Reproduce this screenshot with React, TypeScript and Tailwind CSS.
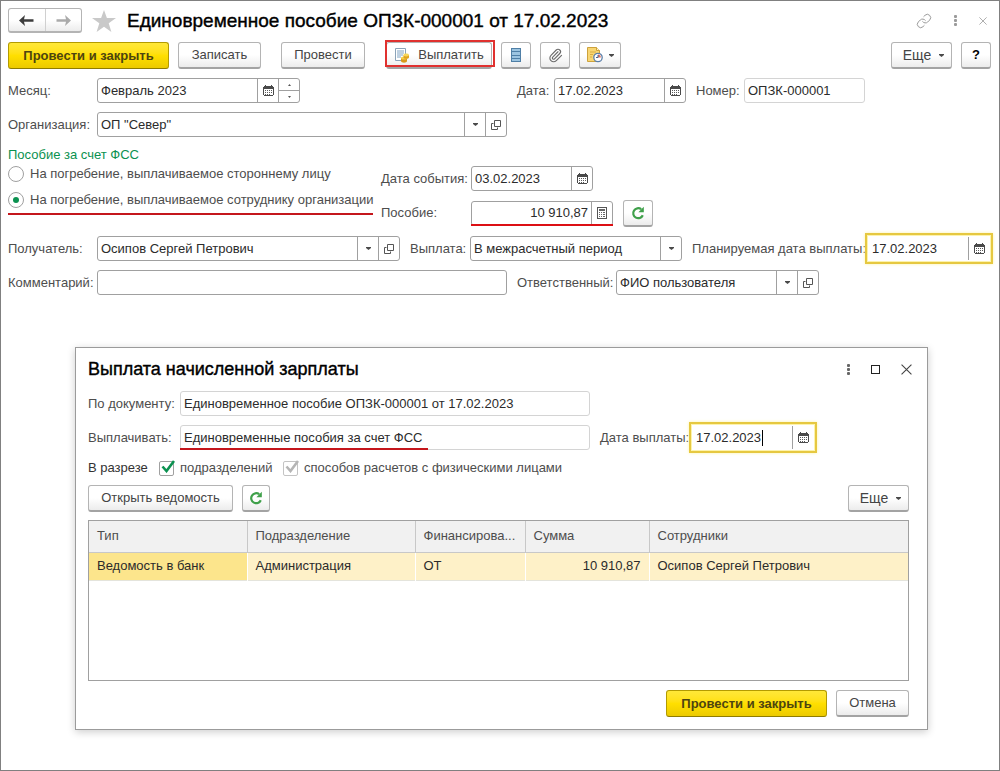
import type { ReactNode } from "react";
import { Link, Paperclip } from "lucide-react";

const cx = (...parts: (string | false | undefined)[]) => parts.filter(Boolean).join(" ");

/* ---------- icons ---------- */

function CalendarIcon() {
  return (
    <svg width="11" height="11" viewBox="0 0 11 11" shapeRendering="crispEdges" aria-hidden="true">
      <path d="M2 0h1v1h5V0h1v1h1v1h1v8h-1v1H1v-1H0V2h1V1h1z" fill="#4a4a4a" />
      <path d="M1 4h9v6H1z" fill="#fff" />
      <path d="M2 5h1v1H2zM4 5h1v1H4zM6 5h1v1H6zM8 5h1v1H8zM2 7h1v1H2zM4 7h1v1H4zM6 7h1v1H6zM8 7h1v1H8zM4 9h1v1H4zM2 9h1v1H2zM6 9h1v1H6z" fill="#5a5a5a" />
    </svg>
  );
}

function CalculatorIcon() {
  return (
    <svg width="10" height="12" viewBox="0 0 10 12" shapeRendering="crispEdges" aria-hidden="true">
      <path d="M.5.5h9v11h-9z" fill="#fff" stroke="#555" />
      <path d="M2 2h6v2H2z" fill="#666" />
      <path d="M2 5h1v1H2zM4 5h1v1H4zM6 5h2v1H6zM2 7h1v1H2zM4 7h1v1H4zM6 7h2v1H6zM2 9h1v1H2zM4 9h1v1H4zM6 9h2v1H6z" fill="#666" />
    </svg>
  );
}

function ArrowDown() {
  return (
    <svg width="5" height="3" viewBox="0 0 5 3" aria-hidden="true">
      <path d="M0 0h5v1L2.500 3 0 1z" fill="#4a4a4a" />
    </svg>
  );
}

function OpenIcon() {
  return (
    <svg width="10" height="10" viewBox="0 0 10 10" fill="none" stroke="#555" aria-hidden="true">
      <path d="M3.500.5h6v6h-6zM2.500 3.500h-2v6h6v-2" />
    </svg>
  );
}

function RefreshIcon() {
  return (
    <svg width="14" height="14" viewBox="0 0 14 14" fill="none" aria-hidden="true">
      <path d="M11.800 9.200A5 5 0 1 1 10.200 3.200" stroke="#3fa04a" strokeWidth="2.200" />
      <path d="M12.800.8v5.400H7.400z" fill="#3fa04a" />
    </svg>
  );
}

function NavArrow({ back = false }: { back?: boolean }) {
  return (
    <svg width="15" height="11" viewBox="0 0 15 11" aria-hidden="true">
      {back ? (
        <path d="M6 0 0 5.500 6 11 5 6.700h9.500V4.300H5z" fill="#3c3c3c" />
      ) : (
        <path d="m9 0 6 5.500L9 11l1-4.300H.5V4.300H10z" fill="#aaa" />
      )}
    </svg>
  );
}

function StarIcon() {
  return (
    <svg width="24" height="22" viewBox="0 0 24 22" aria-hidden="true">
      <path d="m12 0 2.900 8H24l-7.300 5.200L19.400 22 12 16.800 4.600 22l2.700-8.800L0 8h9.100z" fill="#c9c9c9" />
    </svg>
  );
}

function DotsIcon({ color }: { color: string }) {
  return (
    <svg width="3" height="11" viewBox="0 0 3 11" fill={color} aria-hidden="true">
      <rect width="3" height="3" rx="1" />
      <rect y="4" width="3" height="3" rx="1" />
      <rect y="8" width="3" height="3" rx="1" />
    </svg>
  );
}

function CrossIcon({ size, color }: { size: number; color: string }) {
  return (
    <svg width={size} height={size} viewBox="0 0 10 10" stroke={color} aria-hidden="true">
      <path d="m.5.5 9 9m0-9-9 9" />
    </svg>
  );
}

function PayIcon() {
  return (
    <svg width="16" height="16" viewBox="0 0 16 16" aria-hidden="true">
      <path d="M1.500 1.500h10v12h-10z" fill="#fff" stroke="#8ba3b8" />
      <path d="M3 4h7M3 6h7M3 8h6M3 10h4" stroke="#7fa3c4" />
      <path d="M7 11v3c0 2.200 6 2.200 6 0v-3z" fill="#d79a1c" />
      <ellipse cx="10" cy="11" rx="3" ry="1.500" fill="#f5cf4b" />
      <path d="M9.500 8v2.500c0 1.800 5.500 1.800 5.500 0V8z" fill="#dfa320" />
      <ellipse cx="12.200" cy="8" rx="2.800" ry="1.400" fill="#f7d65a" />
    </svg>
  );
}

function RegisterIcon() {
  return (
    <svg width="10" height="14" viewBox="0 0 10 14" shapeRendering="crispEdges" aria-hidden="true">
      <path d="M0 0h10v14H0z" fill="#4f7fa6" />
      <path d="M1 1h8v2H1zM1 4h8v3H1zM1 8h8v2H1zM1 11h8v2H1z" fill="#9cc4e0" />
    </svg>
  );
}

function ScheduleIcon() {
  return (
    <svg width="16" height="16" viewBox="0 0 16 16" aria-hidden="true">
      <path d="M.5.5h9l3 3v11H.5z" fill="#f8d673" stroke="#cda23c" />
      <path d="M9.500.5v3h3" fill="#fff3c4" stroke="#cda23c" />
      <path d="M3 5h6M3 7.500h3M3 10h2" stroke="#d8ac42" />
      <circle cx="11" cy="10.500" r="4.200" fill="#fff" stroke="#5b7fa8" strokeWidth="1.300" />
      <path d="M11 10.500V7.600a2.900 2.900 0 0 1 2.900 2.900z" fill="#e2735f" />
      <path d="M11 8v2.500H9" fill="none" stroke="#47648a" />
    </svg>
  );
}

/* ---------- controls ---------- */

type ButtonProps = { children: ReactNode; className?: string; label?: string; primary?: boolean };

function Button({ children, className, label, primary }: ButtonProps) {
  return (
    <button
      type="button"
      aria-label={label}
      className={cx(
        "flex h-[27px] shrink-0 items-center justify-center rounded-[3px] border",
        primary
          ? "border-[#b39b00] border-b-[#8f7c00] bg-linear-to-b from-[#ffe838] via-[#ffdf00] to-[#ecca00] font-bold text-[#4d4410]"
          : "border-[#b4b4b4] border-b-2 border-b-[#a3a3a3] bg-linear-to-b from-white from-50% to-[#ececec] text-[#444]",
        className,
      )}
    >
      {children}
    </button>
  );
}

function MoreButton() {
  return (
    <Button className="w-[61px] gap-2 pl-1">
      <span className="text-[14px]">Еще</span> <ArrowDown />
    </Button>
  );
}

function FieldButton({ label, children }: { label: string; children: ReactNode }) {
  return (
    <button type="button" aria-label={label} className="flex w-[21px] shrink-0 items-center justify-center border-l border-[#a0a0a0]">
      {children}
    </button>
  );
}

function Spinner() {
  return (
    <div className="flex w-[21px] shrink-0 flex-col border-l border-[#a0a0a0]">
      <button type="button" aria-label="Следующий месяц" className="flex flex-1 items-center justify-center border-b border-[#a0a0a0]">
        <svg width="3" height="2" viewBox="0 0 3 2" aria-hidden="true"><path d="M0 2h3L1.500 0z" fill="#555" /></svg>
      </button>
      <button type="button" aria-label="Предыдущий месяц" className="flex flex-1 items-center justify-center">
        <svg width="3" height="2" viewBox="0 0 3 2" aria-hidden="true"><path d="M0 0h3L1.500 2z" fill="#555" /></svg>
      </button>
    </div>
  );
}

type FieldProps = {
  id: string;
  value: string;
  className: string;
  children?: ReactNode;
  readOnly?: boolean;
  right?: boolean;
  select?: boolean;
  highlighted?: boolean;
};

function Field({ id, value, className, children, readOnly, right, select, highlighted }: FieldProps) {
  return (
    <div
      className={cx(
        "relative flex h-[25px] shrink-0 border bg-white",
        highlighted
          ? "border-transparent shadow-[0_0_3px_3px_#fdf3a8] outline-2 outline-offset-1 outline-[#e6c840]"
          : readOnly
            ? "rounded-[3px] border-[#d4d4d4]"
            : "rounded-[3px] border-[#a0a0a0]",
        className,
      )}
    >
      {select ? (
        <div className="grid min-w-0 flex-1">
          <select id={id} defaultValue={value} className="col-start-1 row-start-1 w-full appearance-none bg-transparent pr-6 pl-[3px] outline-none">
            <option>{value}</option>
          </select>
          <span className="pointer-events-none col-start-1 row-start-1 flex w-[21px] items-center justify-center justify-self-end border-l border-[#a0a0a0]">
            <ArrowDown />
          </span>
        </div>
      ) : (
        <input
          id={id}
          defaultValue={value}
          readOnly={readOnly}
          className={cx("min-w-0 flex-1 bg-transparent px-[3px] outline-none", right && "text-right")}
        />
      )}
      {children}
    </div>
  );
}

function Label({ htmlFor, className, children }: { htmlFor: string; className?: string; children: ReactNode }) {
  return (
    <label htmlFor={htmlFor} className={cx("shrink-0 whitespace-nowrap text-[#4d4d4d]", className)}>
      {children}
    </label>
  );
}

function Radio({ label, checked }: { label: string; checked?: boolean }) {
  return (
    <label className="flex h-5 items-center gap-[6px] whitespace-nowrap text-[#4d4d4d]">
      <input
        type="radio"
        name="benefit"
        defaultChecked={checked}
        className="grid size-4 shrink-0 appearance-none place-items-center rounded-full border border-[#a0a0a0] bg-white before:size-[6px] before:rounded-full checked:before:bg-[#0b9150]"
      />
      {label}
    </label>
  );
}

function Checkbox({ label, disabled, className }: { label: string; disabled?: boolean; className?: string }) {
  return (
    <label className={cx("flex items-center gap-[6px] whitespace-nowrap text-[#4d4d4d]", className)}>
      <span className="relative size-[15px]">
        <input
          type="checkbox"
          defaultChecked
          disabled={disabled}
          className={cx("block size-[15px] appearance-none rounded-[2px] border bg-white", disabled ? "border-[#c4c4c4]" : "border-[#a0a0a0]")}
        />
        <svg className="pointer-events-none absolute -top-px left-[2px]" width="14" height="13" viewBox="0 0 14 13" aria-hidden="true">
          <path d="m1.500 6.500 4 4.500L13 1" fill="none" stroke={disabled ? "#b5b5b5" : "#0b9150"} strokeWidth="2.600" />
        </svg>
      </span>
      {label}
    </label>
  );
}

/* ---------- payment dialog ---------- */

function PaymentDialog() {
  return (
    <section
      role="dialog"
      aria-labelledby="dialog-title"
      className="mt-[52px] ml-[67px] flex w-full max-w-[853px] flex-col border border-[#9b9b9b] bg-white px-3 pt-[9px] pb-3 shadow-[0_2px_8px_rgba(0,0,0,0.2)]"
    >
      <header className="flex h-6 items-center">
        <h2 id="dialog-title" className="mr-auto text-[18px] leading-6 text-black [-webkit-text-stroke:0.4px_#000]">
          Выплата начисленной зарплаты
        </h2>
        <div className="flex items-center gap-[21px] pr-[1px]">
          <button type="button" aria-label="Меню"><DotsIcon color="#666" /></button>
          <button type="button" aria-label="Развернуть" className="size-[9px] border border-[#222]" />
          <button type="button" aria-label="Закрыть" className="pr-[2px]"><CrossIcon size={11} color="#444" /></button>
        </div>
      </header>

      <div className="mt-[10px] flex items-center">
        <Label htmlFor="by-document" className="w-[92px]">По документу:</Label>
        <Field id="by-document" value="Единовременное пособие ОПЗК-000001 от 17.02.2023" className="w-[410px]" readOnly />
      </div>
      <div className="mt-[9px] flex items-center">
        <Label htmlFor="pay-kind" className="w-[92px]">Выплачивать:</Label>
        <Field id="pay-kind" value="Единовременные пособия за счет ФСС" className="w-[410px]" readOnly>
          <span className="absolute -bottom-px -left-px h-[2px] w-[248px] bg-[#c4161c]" />
        </Field>
        <Label htmlFor="pay-date" className="w-[102px] pl-[10px]">Дата выплаты:</Label>
        <Field id="pay-date" value="17.02.2023" className="w-[122px]" highlighted>
          <span className="absolute top-1 left-[69px] h-4 w-px bg-black" />
          <FieldButton label="Выбрать дату"><CalendarIcon /></FieldButton>
        </Field>
      </div>

      <div className="mt-2 flex h-5 items-center">
        <span className="w-[71px] text-[#333]">В разрезе</span>
        <Checkbox label="подразделений" className="w-[124px]" />
        <Checkbox label="способов расчетов с физическими лицами" disabled />
      </div>

      <div className="mt-[7px] flex gap-[9px]">
        <Button className="w-[145px]">Открыть ведомость</Button>
        <Button className="w-7" label="Обновить"><RefreshIcon /></Button>
        <div className="ml-auto pr-[6px]"><MoreButton /></div>
      </div>

      <div className="mt-2 mr-[6px] h-[161px] border border-[#a0a0a0]">
        <table className="w-full table-fixed border-collapse text-left">
          <colgroup>
            <col className="w-[158px]" />
            <col className="w-[168px]" />
            <col className="w-[110px]" />
            <col className="w-[124px]" />
            <col />
          </colgroup>
          <thead>
            <tr className="h-[31px] border-b border-[#c8c8c8] bg-[#f1f1f1] text-[#4d4d4d]">
              {["Тип", "Подразделение", "Финансирова...", "Сумма", "Сотрудники"].map((title) => (
                <th key={title} className="border-r border-[#c8c8c8] px-2 font-normal whitespace-nowrap last:border-r-0">{title}</th>
              ))}
            </tr>
          </thead>
          <tbody>
            <tr className="h-7 border-b border-[#e4e4dc] bg-[#fef1c8]">
              <td className="border-r border-white bg-[#fce58c] px-2">Ведомость в банк</td>
              <td className="border-r border-white px-2">Администрация</td>
              <td className="border-r border-white px-2">ОТ</td>
              <td className="border-r border-white px-2 text-right">10 910,87</td>
              <td className="px-2">Осипов Сергей Петрович</td>
            </tr>
          </tbody>
        </table>
      </div>

      <footer className="mt-[9px] flex justify-end gap-[9px] pr-[6px]">
        <Button primary className="w-[161px]">Провести и закрыть</Button>
        <Button className="w-[73px]">Отмена</Button>
      </footer>
    </section>
  );
}

/* ---------- page ---------- */

export default function App() {
  return (
    <main className="flex min-h-screen flex-col border border-[#808080] bg-white pt-[7px] pr-2 pb-10 pl-[7px] font-['Liberation_Sans',Arial,sans-serif] text-[13px] leading-4 text-[#2b2b2b]">
      <header className="flex h-[25px] items-center">
        <div className="flex h-[25px] w-[74px] rounded-[3px] border border-b-2 border-[#b4b4b4] bg-linear-to-b from-white from-50% to-[#ececec]">
          <button type="button" aria-label="Назад" className="flex flex-1 items-center justify-center border-r border-[#d0d0d0]"><NavArrow back /></button>
          <button type="button" aria-label="Вперед" className="flex flex-1 items-center justify-center"><NavArrow /></button>
        </div>
        <button type="button" aria-label="В избранное" className="ml-[10px]"><StarIcon /></button>
        <h1 className="mr-auto ml-[11px] text-[19px] leading-6 text-black [-webkit-text-stroke:0.4px_#000]">
          Единовременное пособие ОПЗК-000001 от 17.02.2023
        </h1>
        <div className="flex items-center gap-[22px] pr-1">
          <button type="button" aria-label="Ссылка"><Link size={16} strokeWidth={1.5} color="#9b9b9b" /></button>
          <button type="button" aria-label="Меню"><DotsIcon color="#9b9b9b" /></button>
          <button type="button" aria-label="Закрыть"><CrossIcon size={8} color="#9b9b9b" /></button>
        </div>
      </header>

      <div className="mt-[9px] flex items-center gap-[9px]">
        <Button primary className="w-[161px]">Провести и закрыть</Button>
        <Button className="w-[83px]">Записать</Button>
        <Button className="ml-[11px] w-[84px]">Провести</Button>
        <div className="relative ml-3">
          <Button className="w-[106px] gap-2"><PayIcon />Выплатить</Button>
          <span className="pointer-events-none absolute -top-[2px] -right-[3px] bottom-[2px] -left-px border-2 border-[#e0312f]" />
        </div>
        <Button className="w-[30px]" label="Движения документа"><RegisterIcon /></Button>
        <Button className="w-[30px]" label="Присоединенные файлы"><Paperclip size={15} strokeWidth={1.8} color="#6b6b6b" /></Button>
        <Button className="w-[42px] gap-[6px]" label="Отложенные действия"><ScheduleIcon /><ArrowDown /></Button>
        <div className="ml-auto flex gap-[9px]">
          <MoreButton />
          <Button className="w-[30px] font-bold text-black">?</Button>
        </div>
      </div>

      <form className="flex flex-col">
        <div className="mt-[9px] flex items-center">
          <div className="flex w-[509px] items-center">
            <Label htmlFor="month" className="w-[89px]">Месяц:</Label>
            <Field id="month" value="Февраль 2023" className="w-[203px]">
              <FieldButton label="Выбрать месяц"><CalendarIcon /></FieldButton>
              <Spinner />
            </Field>
          </div>
          <Label htmlFor="date" className="w-[37px]">Дата:</Label>
          <Field id="date" value="17.02.2023" className="w-[132px]">
            <FieldButton label="Выбрать дату"><CalendarIcon /></FieldButton>
          </Field>
          <Label htmlFor="number" className="w-[58px] pl-[10px]">Номер:</Label>
          <Field id="number" value="ОПЗК-000001" className="w-[121px]" readOnly />
        </div>

        <div className="mt-[9px] flex items-center">
          <Label htmlFor="organization" className="w-[89px]">Организация:</Label>
          <Field id="organization" value={'ОП "Север"'} className="w-[410px]" select>
            <FieldButton label="Открыть организацию"><OpenIcon /></FieldButton>
          </Field>
        </div>

        <div className="mt-[9px] flex items-start">
          <fieldset className="w-[373px]">
            <legend className="leading-[18px] text-[#0b9150]">Пособие за счет ФСС</legend>
            <Radio label="На погребение, выплачиваемое стороннему лицу" />
            <div className="mt-[6px] w-[365px] border-b-2 border-[#c4161c] pb-[3px]">
              <Radio label="На погребение, выплачиваемое сотруднику организации" checked />
            </div>
          </fieldset>
          <div className="mt-5 flex flex-col gap-[9px]">
            <div className="flex items-center">
              <Label htmlFor="event-date" className="w-[90px]">Дата события:</Label>
              <Field id="event-date" value="03.02.2023" className="w-[122px]">
                <FieldButton label="Выбрать дату"><CalendarIcon /></FieldButton>
              </Field>
            </div>
            <div className="flex h-[26px] items-center">
              <Label htmlFor="benefit-sum" className="w-[90px]">Пособие:</Label>
              <Field id="benefit-sum" value="10 910,87" className="w-[142px]" right>
                <FieldButton label="Калькулятор"><CalculatorIcon /></FieldButton>
                <span className="absolute -inset-x-px -bottom-px h-[2px] bg-[#dc0f14]" />
              </Field>
              <Button className="ml-[10px] w-[30px]" label="Пересчитать"><RefreshIcon /></Button>
            </div>
          </div>
        </div>

        <div className="mt-[10px] flex items-center">
          <Label htmlFor="recipient" className="w-[89px]">Получатель:</Label>
          <Field id="recipient" value="Осипов Сергей Петрович" className="w-[303px]" select>
            <FieldButton label="Открыть получателя"><OpenIcon /></FieldButton>
          </Field>
          <Label htmlFor="payment" className="w-[70px] pl-[10px]">Выплата:</Label>
          <Field id="payment" value="В межрасчетный период" className="w-[212px]" select />
          <Label htmlFor="planned-date" className="w-[186px] pl-[10px]">Планируемая дата выплаты:</Label>
          <Field id="planned-date" value="17.02.2023" className="w-[122px]" highlighted>
            <FieldButton label="Выбрать дату"><CalendarIcon /></FieldButton>
          </Field>
        </div>

        <div className="mt-[9px] flex items-center">
          <Label htmlFor="comment" className="w-[89px]">Комментарий:</Label>
          <Field id="comment" value="" className="w-[410px]" />
          <Label htmlFor="responsible" className="w-[109px] pl-[10px]">Ответственный:</Label>
          <Field id="responsible" value="ФИО пользователя" className="w-[203px]" select>
            <FieldButton label="Открыть ответственного"><OpenIcon /></FieldButton>
          </Field>
        </div>
      </form>

      <PaymentDialog />
    </main>
  );
}
